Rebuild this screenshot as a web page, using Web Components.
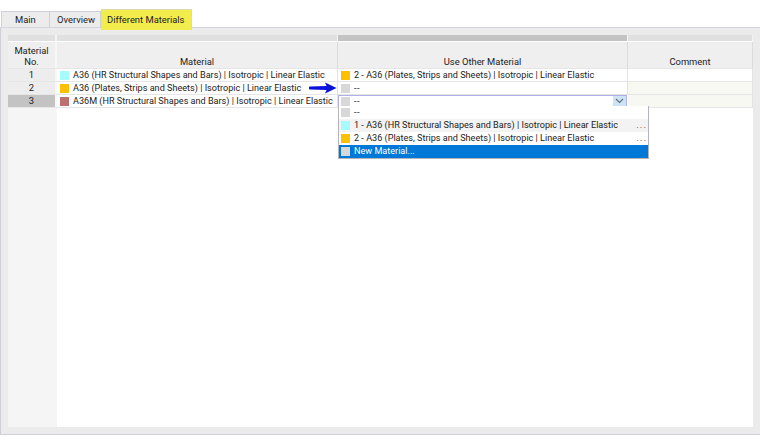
<!DOCTYPE html>
<html>
<head>
<meta charset="utf-8">
<style>
  html, body { margin: 0; padding: 0; background: #fff; }
  body { width: 760px; height: 444px; overflow: hidden; font: 9.4px Roboto, "Noto Sans", sans-serif; color: #222; }
</style>
</head>
<body>
<material-dialog>
  <tab-item slot="tabs" style="width: 49px; padding-left: 13px; border-left: 1px solid #d0d0d8">Main</tab-item>
  <tab-item slot="tabs" style="width: 51px; padding-left: 7px">Overview</tab-item>
  <tab-item slot="tabs" active style="width: 91px; padding-left: 5px">Different Materials</tab-item>
  <material-table></material-table>
</material-dialog>

<script>
class materialDialog extends HTMLElement {
  constructor() {
    super();
    this.attachShadow({ mode: "open" }).innerHTML = /* html */ `
      <style>
        :host { display: block; padding-top: 9px; }
        .tabs { display: flex; height: 18px; padding-left: 1px; position: relative; z-index: 1; }
        .panel {
          box-sizing: border-box;
          height: 408px;
          padding: 7px 7px 7px 7px;
          background: #ebebeb;
          border-top: 1px solid #d4d4dc;
          border-left: 1px solid #cfcfd8;
          border-bottom: 1px solid #cfcfd8;
        }
      </style>
      <div class="tabs"><slot name="tabs"></slot></div>
      <div class="panel"><slot></slot></div>`;
  }
}

class tabItem extends HTMLElement {
  constructor() {
    super();
    this.attachShadow({ mode: "open" }).innerHTML = /* html */ `
      <style>
        :host {
          display: block;
          flex: none;
          box-sizing: border-box;
          height: 16px;
          margin-top: 2px;
          background: #ececec;
          border: 1px solid #d0d0d8;
          border-bottom: 0;
          border-left: 0;
          line-height: 15px;
          white-space: nowrap;
        }
        :host([active]) {
          height: 21px;
          margin-top: 0;
          line-height: 19px;
          background: #f2ec4d;
          border: 1px solid #dcdcb0;
          border-bottom: 0;
        }
      </style>
      <slot></slot>`;
  }
}

class colorSwatch extends HTMLElement {
  constructor() {
    super();
    this.attachShadow({ mode: "open" }).innerHTML = /* html */ `
      <style>
        :host {
          display: block;
          flex: none;
          width: 9px;
          height: 9px;
          background: var(--swatch, #d8d8d8);
        }
      </style>`;
  }
}

class materialLabel extends HTMLElement {
  constructor() {
    super();
    this.attachShadow({ mode: "open" }).innerHTML = /* html */ `
      <style>
        :host {
          display: flex;
          align-items: center;
          gap: 4px;
          height: 12px;
          padding-left: var(--label-pad, 3px);
          font-size: 9.1px;
          line-height: 12px;
          white-space: nowrap;
          --swatch: ${this.getAttribute("color") || "#d8d8d8"};
        }
      </style>
      <color-swatch></color-swatch><slot></slot>`;
  }
}

class blueArrow extends HTMLElement {
  constructor() {
    super();
    this.attachShadow({ mode: "open" }).innerHTML = /* html */ `
      <style>
        :host { display: block; position: absolute; left: 301px; top: 47px; width: 28px; height: 12px; }
        svg { display: block; }
      </style>
      <svg width="28" height="12" viewBox="0 0 28 12">
        <path d="M0 5 Q0 4.6 1 4.5 L17.5 4 L16 0.6 L27.6 6 L16 11.4 L17.5 8 L1 7.5 Q0 7.4 0 7 Z" fill="#0a14d8"/>
      </svg>`;
  }
}

class comboList extends HTMLElement {
  constructor() {
    super();
    this.attachShadow({ mode: "open" }).innerHTML = /* html */ `
      <style>
        :host {
          display: block;
          position: absolute;
          left: 330px;
          top: 71px;
          width: 311px;
          box-sizing: border-box;
          background: #fff;
          border: 1px solid #b4b4bc;
          border-top: 0;
          --label-pad: 2px;
        }
        .opt { position: relative; height: 13px; box-sizing: border-box; }
        .alt { background: #f3f3f3; }
        .sel { background: #0078d7; color: #fff; }
        .more { position: absolute; right: 1px; top: 0; line-height: 12px; letter-spacing: 1.1px; color: #444; }
      </style>
      <div class="opt"><material-label><span style="letter-spacing:.6px">--</span></material-label></div>
      <div class="opt alt"><material-label color="#a6fbff">1 - A36 (HR Structural Shapes and Bars) | Isotropic | Linear Elastic</material-label><span class="more">...</span></div>
      <div class="opt"><material-label color="#fcc000">2 - A36 (Plates, Strips and Sheets) | Isotropic | Linear Elastic</material-label><span class="more">...</span></div>
      <div class="opt sel"><material-label>New Material...</material-label></div>`;
  }
}

class materialTable extends HTMLElement {
  constructor() {
    super();
    this.attachShadow({ mode: "open" }).innerHTML = /* html */ `
      <style>
        :host { display: block; position: relative; height: 392px; background: #fff; }
        .grid {
          display: grid;
          grid-template-columns: 49px 281px 290px 125px;
          grid-template-rows: 6px 1px 26px 1px 12px 1px 12px 1px 12px 1px 1fr;
          height: 100%;
        }
        .strip { background: #e0e0e0; border-right: 1px solid #f4f4f4; box-sizing: border-box; }
        .strip.first { border-right-width: 2px; }
        .strip.dark { background: #c3c3c3; }
        .gap { grid-column: 1 / -1; }
        .line { grid-column: 1 / -1; background: #e6e6e6; }
        .head {
          background: #efefef;
          border-right: 1px solid #dcdcdc;
          box-sizing: border-box;
          display: flex;
          align-items: flex-end;
          justify-content: center;
          text-align: center;
          line-height: 11px;
          padding-bottom: 1px;
        }
        .head.first { border-right: 2px solid #f7f7f7; }
        .num {
          background: #ededed;
          text-align: center;
          line-height: 12px;
          border-right: 2px solid #f7f7f7;
          box-sizing: border-box;
        }
        .num.cur { background: #c3c3c3; }
        .cell { background: #fff; border-right: 1px solid #e3e3e3; box-sizing: border-box; min-width: 0; }
        .soft { background: #f8f8f2; }
        .rest { background: #f5f5f5; }
        .blank { background: #fff; }
        .dash { letter-spacing: .6px; }
        .combo {
          position: relative;
          background: #fff;
          outline: 1px solid #b0b0e8;
          outline-offset: -1px;
          margin-right: 1px;
        }
        .drop {
          position: absolute; right: 1px; top: 1px; width: 13px; height: 10px;
          background: #cde4f7;
          display: flex; align-items: center; justify-content: center;
        }
      </style>
      <div class="grid">
        <div class="strip first"></div><div class="strip"></div><div class="strip dark"></div><div class="strip"></div>
        <div class="gap"></div>

        <div class="head first">Material<br>No.</div>
        <div class="head">Material</div>
        <div class="head">Use Other Material</div>
        <div class="head">Comment</div>
        <div class="line"></div>

        <div class="num">1</div>
        <div class="cell"><material-label color="#a6fbff">A36 (HR Structural Shapes and Bars) | Isotropic | Linear Elastic</material-label></div>
        <div class="cell"><material-label color="#fcc000">2 - A36 (Plates, Strips and Sheets) | Isotropic | Linear Elastic</material-label></div>
        <div class="cell"></div>
        <div class="line"></div>

        <div class="num">2</div>
        <div class="cell"><material-label color="#fcc000">A36 (Plates, Strips and Sheets) | Isotropic | Linear Elastic</material-label></div>
        <div class="cell"><material-label><span class="dash">--</span></material-label></div>
        <div class="cell soft"></div>
        <div class="line"></div>

        <div class="num cur">3</div>
        <div class="cell"><material-label color="#bd7070">A36M (HR Structural Shapes and Bars) | Isotropic | Linear Elastic</material-label></div>
        <div class="combo"><material-label><span class="dash">--</span></material-label><div class="drop">
          <svg width="9" height="6" viewBox="0 0 9 6"><path d="M1 1 L4.5 4.5 L8 1" fill="none" stroke="#5f6b78" stroke-width="1.1"/></svg>
        </div></div>
        <div class="cell soft"></div>
        <div class="line"></div>

        <div class="rest"></div>
        <div class="blank" style="grid-column: 2 / -1"></div>
      </div>
      <blue-arrow></blue-arrow>
      <combo-list></combo-list>`;
  }
}

customElements.define("color-swatch", colorSwatch);
customElements.define("material-label", materialLabel);
customElements.define("tab-item", tabItem);
customElements.define("blue-arrow", blueArrow);
customElements.define("combo-list", comboList);
customElements.define("material-table", materialTable);
customElements.define("material-dialog", materialDialog);
</script>
</body>
</html>
